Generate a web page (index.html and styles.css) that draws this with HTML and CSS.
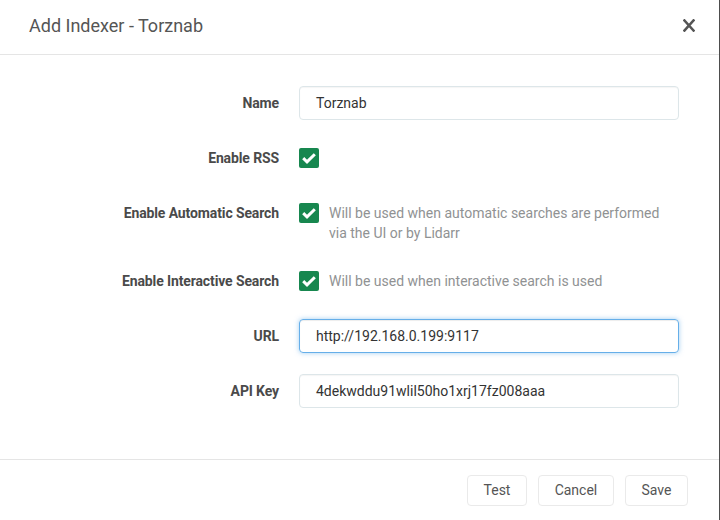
FILE: index.html
```html
<!DOCTYPE html>
<html>
<head>
<meta charset="utf-8">
<link rel="stylesheet" href="styles.css">
</head>
<body>
<div class="modal">
  <div class="header">
    <div class="title">Add Indexer - Torznab</div>
    <div class="close">
      <svg width="12" height="13" viewBox="0 0 12 13"><path d="M1.5 1.5 L10.5 11.5 M10.5 1.5 L1.5 11.5" stroke="#555" stroke-width="2.6" stroke-linecap="square"/></svg>
    </div>
  </div>
  <div class="body">
    <div class="row">
      <div class="label">Name</div>
      <div class="control"><div class="input">Torznab</div></div>
    </div>
    <div class="row">
      <div class="label">Enable RSS</div>
      <div class="control check-wrap"><span class="check"><svg width="16" height="14" viewBox="0 0 16 14"><path d="M2.2 7.2 L6 10.8 L13.8 3.2" fill="none" stroke="#fff" stroke-width="3"/></svg></span></div>
    </div>
    <div class="row">
      <div class="label">Enable Automatic Search</div>
      <div class="control check-wrap"><span class="check"><svg width="16" height="14" viewBox="0 0 16 14"><path d="M2.2 7.2 L6 10.8 L13.8 3.2" fill="none" stroke="#fff" stroke-width="3"/></svg></span><span class="help">Will be used when automatic searches are performed via the UI or by Lidarr</span></div>
    </div>
    <div class="row">
      <div class="label">Enable Interactive Search</div>
      <div class="control check-wrap"><span class="check"><svg width="16" height="14" viewBox="0 0 16 14"><path d="M2.2 7.2 L6 10.8 L13.8 3.2" fill="none" stroke="#fff" stroke-width="3"/></svg></span><span class="help">Will be used when interactive search is used</span></div>
    </div>
    <div class="row">
      <div class="label">URL</div>
      <div class="control"><div class="input focus">http://192.168.0.199:9117</div></div>
    </div>
    <div class="row">
      <div class="label">API Key</div>
      <div class="control"><div class="input">4dekwddu91wlil50ho1xrj17fz008aaa</div></div>
    </div>
  </div>
  <div class="footer">
    <button class="btn">Test</button>
    <button class="btn">Cancel</button>
    <button class="btn">Save</button>
  </div>
</div>
</body>
</html>
```

FILE: styles.css
```css
html, body {
  margin: 0;
  padding: 0;
}
body {
  background: #4d4d4d;
  font-family: Roboto, "Liberation Sans", sans-serif;
  width: 720px;
  height: 520px;
  overflow: hidden;
}
.modal {
  width: 719px;
  height: 520px;
  background: #fff;
  display: flex;
  flex-direction: column;
}
.header {
  height: 55px;
  border-bottom: 1px solid #e5e5e5;
  display: flex;
  align-items: center;
  justify-content: space-between;
  padding: 0 24px 0 29px;
  box-sizing: border-box;
  flex: none;
}
.title {
  font-size: 18px;
  color: #555;
  font-weight: 400;
  margin-top: -3px;
}
.close {
  display: flex;
  margin-top: -4px;
}
.body {
  flex: 1;
  padding: 31px 40px 0 29px;
}
.row {
  display: flex;
  margin-bottom: 20px;
  min-height: 35px;
}
.label {
  width: 250px;
  flex: none;
  text-align: right;
  font-size: 14px;
  font-weight: 700;
  color: #4a4a4a;
  line-height: 20px;
  padding-top: 7px;
  margin-right: 20px;
  letter-spacing: -0.12px;
}
.control {
  flex: 1;
}
.input {
  height: 34px;
  box-sizing: border-box;
  border: 1px solid #dde6e9;
  border-radius: 4px;
  padding: 0 16px;
  font-size: 14px;
  color: #333;
  line-height: 33px;
  box-shadow: inset 0 1px 1px rgba(0,0,0,0.04);
}
.input.focus {
  border-color: #66afe9;
  box-shadow: inset 0 1px 1px rgba(0,0,0,0.075), 0 0 5px rgba(102,175,233,0.6);
}
.check-wrap {
  display: flex;
  align-items: flex-start;
  padding-top: 6px;
}
.check {
  width: 20px;
  height: 20px;
  border-radius: 2px;
  background: #17874f;
  display: flex;
  align-items: center;
  justify-content: center;
  flex: none;
  margin-right: 10px;
  margin-top: 1px;
}
.help {
  font-size: 14px;
  color: #909293;
  line-height: 20px;
  max-width: 340px;
  padding-top: 1px;
  padding-bottom: 1px;
}
.footer {
  height: 61px;
  border-top: 1px solid #e5e5e5;
  display: flex;
  justify-content: flex-end;
  align-items: flex-start;
  padding: 15px 31px 0 0;
  gap: 11px;
  box-sizing: border-box;
  flex: none;
}
.btn {
  font-family: Roboto, "Liberation Sans", sans-serif;
  font-size: 14px;
  color: #555;
  background: #fff;
  border: 1px solid #eaeaea;
  border-radius: 4px;
  height: 31px;
  padding: 0 15.6px 1px;
  margin: 0;
}
```
